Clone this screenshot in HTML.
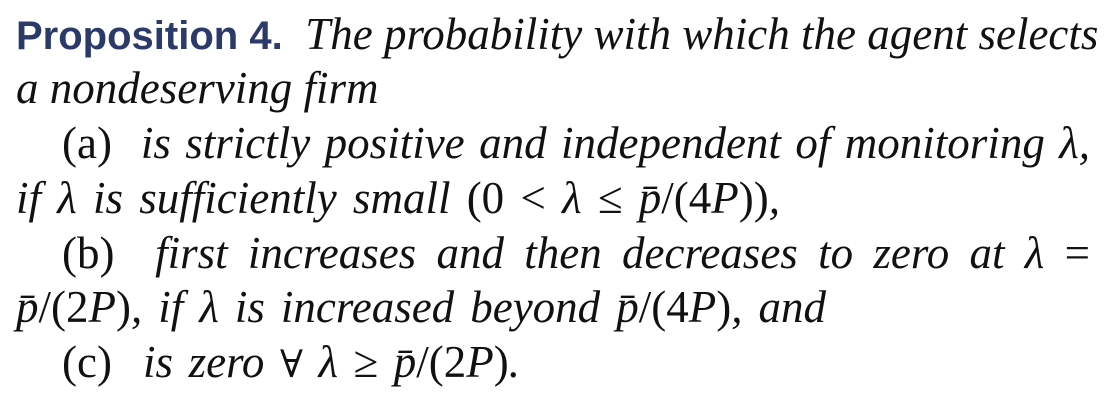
<!DOCTYPE html>
<html><head><meta charset="utf-8"><style>
html,body{margin:0;padding:0;background:#fff;}
body{width:1114px;height:408px;position:relative;overflow:hidden;font-family:"Liberation Serif",serif;color:#111;}
.l{position:absolute;font-size:45px;line-height:54px;height:54px;white-space:nowrap;text-align:justify;text-align-last:justify;font-style:italic;}
.u{font-style:normal;}
.s{font-family:"Liberation Sans",sans-serif;font-weight:bold;font-style:normal;color:#2b3a68;font-size:40px;}
.f{font-family:"DejaVu Serif",serif;font-size:38px;font-style:normal;}
</style></head><body>
<div class="l" style="left:16px;width:1076px;top:7px"><span class="s">Proposition&nbsp;4.</span>&nbsp; The probability with which the agent selects</div>
<div class="l" style="left:16px;width:362px;top:61px">a nondeserving firm</div>
<div class="l" style="left:62px;width:1028px;top:116px"><span class="u">(a)</span>&nbsp; is strictly positive and independent of monitoring λ,</div>
<div class="l" style="left:16px;width:764px;top:171px">if λ is sufficiently small <span class="u">(0</span>&nbsp;<span class="u">&lt;</span>&nbsp;λ&nbsp;<span class="u">≤</span>&nbsp;p̄<span class="u">/(4</span>P<span class="u">))</span>,</div>
<div class="l" style="left:62px;width:1028px;top:226px"><span class="u">(b)</span>&nbsp; first increases and then decreases to zero at λ <span class="u">=</span></div>
<div class="l" style="left:16px;width:810px;top:280px">p̄<span class="u">/(2</span>P<span class="u">)</span>, if λ is increased beyond p̄<span class="u">/(4</span>P<span class="u">)</span>, and</div>
<div class="l" style="left:62px;width:458px;top:335px"><span class="u">(c)</span>&nbsp; is zero <span class="f">∀</span> λ <span class="u">≥</span> p̄<span class="u">/(2</span>P<span class="u">)</span>.</div>
</body></html>
